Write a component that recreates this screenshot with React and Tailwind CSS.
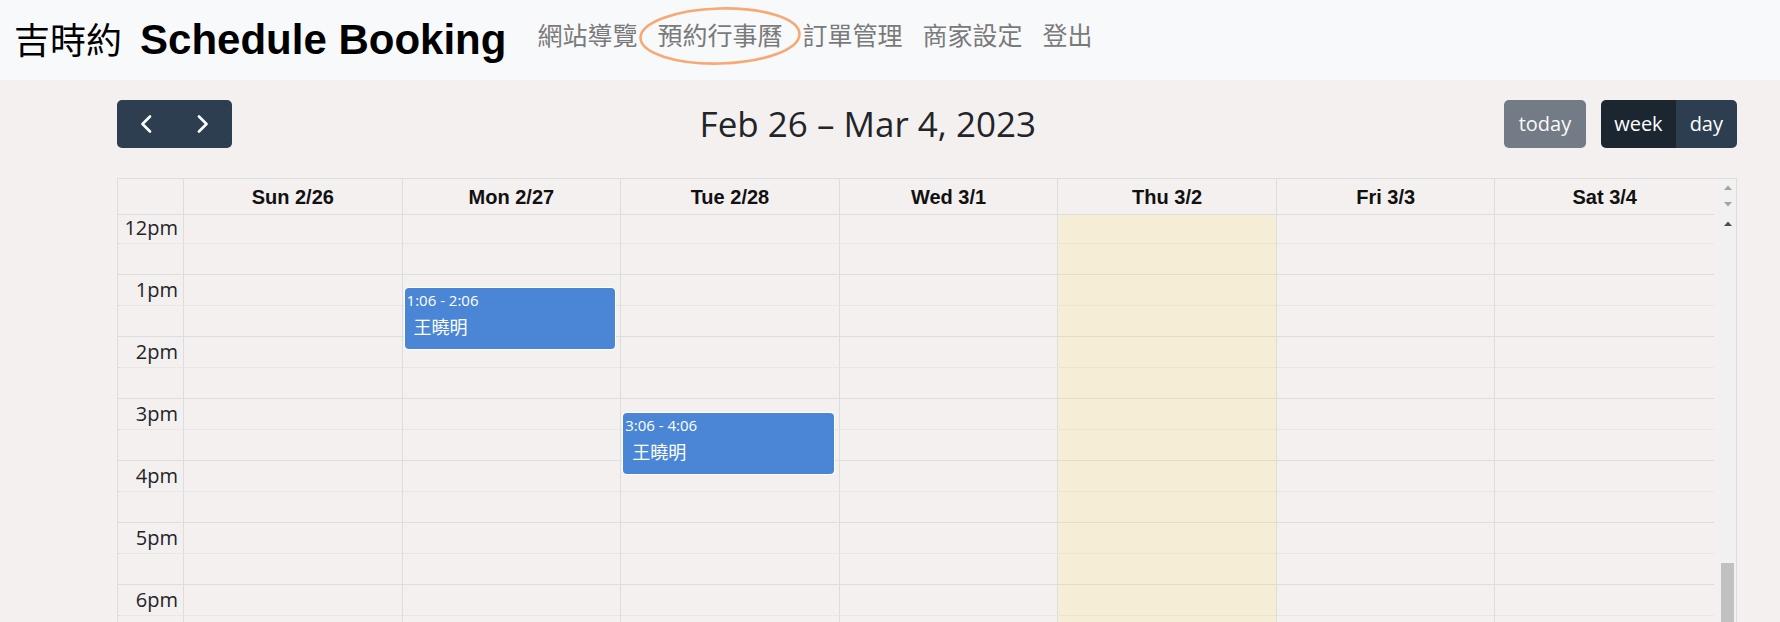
import React from "react";

const NAV = ["網站導覽", "預約行事曆", "訂單管理", "商家設定", "登出"];

const DAYS = [
  { label: "Sun 2/26" },
  { label: "Mon 2/27" },
  { label: "Tue 2/28" },
  { label: "Wed 3/1" },
  { label: "Thu 3/2", today: true },
  { label: "Fri 3/3" },
  { label: "Sat 3/4" },
];

const HOURS = ["12pm", "1pm", "2pm", "3pm", "4pm", "5pm", "6pm"];

// top is measured from the 12pm line
const EVENTS = [
  { day: 1, top: 76, time: "1:06 - 2:06", title: "王曉明" },
  { day: 2, top: 201, time: "3:06 - 4:06", title: "王曉明" },
];

const Chevron = ({ dir }) => (
  <svg width="12" height="18" viewBox="0 0 12 18" fill="none">
    <polyline
      points={dir === "left" ? "10,1.5 2.5,9 10,16.5" : "2,1.5 9.5,9 2,16.5"}
      stroke="#fff"
      strokeWidth="2.6"
      strokeLinecap="round"
      strokeLinejoin="round"
    />
  </svg>
);

const Arrow = ({ up = true, color }) => (
  <svg width="8" height="5" viewBox="0 0 8 5">
    <polygon points={up ? "0,5 4,0.5 8,5" : "0,0 8,0 4,4.5"} fill={color} />
  </svg>
);

const Navbar = () => (
  <div className="flex h-[80px] items-center bg-[#f8f9fa] pl-[14px]">
    <h1 className="flex items-baseline whitespace-nowrap font-['Liberation_Sans',Arial,sans-serif] text-[42px] font-bold leading-none text-black">
      <span className="font-['Noto_Sans_CJK_TC',sans-serif] text-[36px] font-normal">
        吉時約
      </span>
      <span className="ml-[18px]">Schedule Booking</span>
    </h1>
    <ul className="mb-[12px] ml-[21px] flex font-['Noto_Sans_CJK_TC',sans-serif] text-[25px] leading-[36px] text-[#7a7a7a]">
      {NAV.map((item, i) => (
        <li key={item} className="relative px-[10px]">
          {item}
          {i === 1 && (
            <svg
              className="absolute left-[-9px] top-[-10px]"
              width="164"
              height="60"
              viewBox="0 0 164 60"
              fill="none"
            >
              <ellipse
                cx="82"
                cy="30"
                rx="79.5"
                ry="27.5"
                stroke="#f7a874"
                strokeWidth="2.6"
                transform="rotate(-1.5 82 30)"
              />
            </svg>
          )}
        </li>
      ))}
    </ul>
  </div>
);

const Toolbar = () => (
  <div className="flex items-center justify-between font-['Open_Sans',sans-serif] text-[20px] leading-[30px] text-white">
    <div className="flex overflow-hidden rounded-[5px] bg-[#2c3e50]">
      <button className="flex h-[48px] w-[57px] items-center justify-center">
        <Chevron dir="left" />
      </button>
      <button className="flex h-[48px] w-[58px] items-center justify-center">
        <Chevron dir="right" />
      </button>
    </div>
    <h2 className="text-[35px] leading-[48px] text-[#212529]">
      Feb 26 – Mar 4, 2023
    </h2>
    <div className="flex">
      <button className="h-[48px] rounded-[5px] bg-[#737b87] px-[15px] text-[#fafafa]">
        today
      </button>
      <div className="ml-[15px] flex overflow-hidden rounded-[5px]">
        <button className="h-[48px] bg-[#1b2631] px-[13px]">week</button>
        <button className="h-[48px] bg-[#2c3e50] px-[14px]">day</button>
      </div>
    </div>
  </div>
);

const Calendar = () => (
  <div className="mt-[30px] flex h-[444px] border-x border-t border-[#dddddd]">
    <div className="flex w-[1596px] flex-col">
      {/* Day headers */}
      <div className="grid h-[36px] shrink-0 grid-cols-[66px_repeat(7,minmax(0,1fr))] border-b border-[#dddddd] font-['Liberation_Sans',Arial,sans-serif] text-[20px] font-bold text-[#111]">
        <div className="border-r border-[#dddddd]" />
        {DAYS.map((d, i) => (
          <div
            key={d.label}
            className={`flex items-center justify-center ${
              i < 6 ? "border-r border-[#dddddd]" : ""
            }`}
          >
            {d.label}
          </div>
        ))}
      </div>

      {/* Time grid */}
      <div className="relative flex-1 overflow-hidden">
        <div className="relative mt-[-3px]">
          {HOURS.map((h) => (
            <div key={h}>
              <div className="flex h-[31px] border-t border-[#dddddd]">
                <div className="w-[65px] pr-[5px] text-right font-['Open_Sans',sans-serif] text-[20px] leading-[30px] text-[#212529]">
                  {h}
                </div>
              </div>
              <div className="h-[31px] border-t border-dotted border-[#dddddd]" />
            </div>
          ))}

          {/* Columns and events */}
          <div className="absolute inset-0 grid grid-cols-[66px_repeat(7,minmax(0,1fr))]">
            <div className="border-r border-[#dddddd]" />
            {DAYS.map((d, i) => (
              <div
                key={d.label}
                className={`relative ${i < 6 ? "border-r border-[#dddddd]" : ""} ${
                  d.today ? "bg-[rgba(255,220,40,0.12)]" : ""
                }`}
              >
                {EVENTS.filter((e) => e.day === i).map((e) => (
                  <div
                    key={e.time}
                    className="absolute left-[2px] right-[5px] h-[61px] rounded-[4px] bg-[#4a86d5] text-white shadow-[0_0_0_1px_#ffffff]"
                    style={{ top: e.top }}
                  >
                    <div className="pl-[2px] pt-[2px] font-['Open_Sans',sans-serif] text-[15px] leading-[20px]">
                      {e.time}
                    </div>
                    <div className="mt-[4px] pl-[9px] font-['Noto_Sans_CJK_TC',sans-serif] text-[18px] leading-[24px]">
                      {e.title}
                    </div>
                  </div>
                ))}
              </div>
            ))}
          </div>
        </div>
      </div>
    </div>

    {/* Scrollbars */}
    <div className="w-[5px]" />
    <div className="flex w-[17px] flex-col bg-[#f1f1f1]">
      <div className="flex h-[17px] items-center justify-center">
        <Arrow color="#a3a3a3" />
      </div>
      <div className="flex h-[17px] items-center justify-center">
        <Arrow up={false} color="#a3a3a3" />
      </div>
      <div className="h-[2px]" />
      <div className="flex h-[17px] items-center justify-center">
        <Arrow color="#505050" />
      </div>
      <div className="h-[331px]" />
      <div className="mx-[2px] flex-1 bg-[#c1c1c1]" />
    </div>
  </div>
);

export default function App() {
  return (
    <div className="h-[622px] w-[1780px] overflow-hidden bg-[#f5f0f0]">
      <Navbar />
      <div className="ml-[117px] mt-[20px] w-[1620px]">
        <Toolbar />
        <Calendar />
      </div>
    </div>
  );
}
